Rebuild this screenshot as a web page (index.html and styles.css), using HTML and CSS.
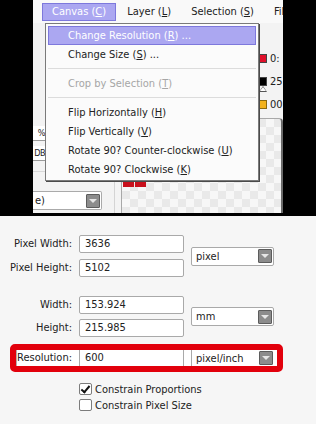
FILE: index.html
```html
<!DOCTYPE html>
<html lang="en">
<head>
    <meta charset="UTF-8">
    <meta name="viewport" content="width=device-width, initial-scale=1.0">
    <title>Canvas - Change Resolution</title>
    <link rel="stylesheet" href="styles.css">
</head>
<body>
    <div class="shot">
        <div class="app">
            <div class="menubar">
                <span class="mb-cut"></span>
                <div class="mb-item active">Canvas (<u>C</u>)</div>
                <div class="mb-item">Layer (<u>L</u>)</div>
                <div class="mb-item">Selection (<u>S</u>)</div>
                <div class="mb-item">Fil</div>
            </div>

            <div class="workspace">
                <div class="left-panel">
                    <div class="lp-field">%</div>
                    <div class="lp-field">DB</div>
                    <div class="lp-sep"></div>
                    <div class="lp-select">
                        <span>e)</span>
                        <span class="drop-btn"></span>
                    </div>
                </div>

                <div class="canvas-wrap">
                    <div class="swatches">
                        <div class="swatch-row"><span class="swatch red"></span>0:</div>
                        <div class="swatch-row"><span class="swatch black"></span>25<span class="marker"></span></div>
                        <div class="swatch-row"><span class="swatch orange"></span>00</div>
                    </div>
                    <div class="canvas">
                        <span class="cell" style="left: 1px;"></span>
                        <span class="cell" style="left: 13px;"></span>
                    </div>
                </div>
            </div>

            <!-- Canvas menu, opened -->
            <div class="dropdown">
                <div class="dd-item hover">Change Resolution (<u>R</u>) ...</div>
                <div class="dd-item">Change Size (<u>S</u>) ...</div>
                <div class="dd-sep"></div>
                <div class="dd-item disabled">Crop by Selection (<u>T</u>)</div>
                <div class="dd-sep"></div>
                <div class="dd-item">Flip Horizontally (<u>H</u>)</div>
                <div class="dd-item">Flip Vertically (<u>V</u>)</div>
                <div class="dd-item">Rotate 90? Counter-clockwise (<u>U</u>)</div>
                <div class="dd-item">Rotate 90? Clockwise (<u>K</u>)</div>
            </div>
        </div>
    </div>

    <div class="dialog">
        <div class="unit-group">
            <div class="lbl">Pixel Width:</div>
            <div class="field">3636</div>
            <div class="lbl">Pixel Height:</div>
            <div class="field">5102</div>
            <div class="select">pixel<span class="drop-btn"></span></div>
        </div>

        <div class="unit-group second">
            <div class="lbl">Width:</div>
            <div class="field">153.924</div>
            <div class="lbl">Height:</div>
            <div class="field">215.985</div>
            <div class="select">mm<span class="drop-btn"></span></div>
        </div>

        <div class="res-row">
            <div class="lbl">Resolution:</div>
            <div class="field">600</div>
            <div class="select">pixel/inch<span class="drop-btn"></span></div>
        </div>

        <div class="checks">
            <div class="check"><span class="box on"></span>Constrain Proportions</div>
            <div class="check"><span class="box"></span>Constrain Pixel Size</div>
        </div>
    </div>
</body>
</html>
```

FILE: styles.css
```css
* {
    margin: 0;
    padding: 0;
    box-sizing: border-box;
}

body {
    width: 316px;
    height: 424px;
    overflow: hidden;
    background: #000;
    font-family: "DejaVu Sans Condensed", "DejaVu Sans", sans-serif;
    font-stretch: condensed;
    font-size: 11px;
    color: #222;
}

u {
    text-decoration: underline;
    text-underline-offset: 1px;
}

/* ---- top screenshot ---- */

.shot {
    height: 216px;
    padding-left: 33px;
}

.app {
    position: relative;
    width: 250px;
    height: 213px;
    background: #f3f3f3;
    overflow: hidden;
}

.menubar {
    display: flex;
    align-items: center;
    height: 23px;
    background: #f9f9f9;
    white-space: nowrap;
}

.mb-cut {
    width: 3px;
    height: 4px;
    margin-right: 9px;
    background: #3a78c8;
}

.mb-item {
    height: 18px;
    line-height: 16px;
    padding: 0 9px;
    border: 1px solid transparent;
    color: #222;
}

.mb-item.active {
    background: #aba7f1;
    border-color: #7d78dc;
    color: #fff;
    margin-right: 1px;
}

.workspace {
    display: flex;
    height: 190px;
}

.left-panel {
    width: 82px;
    border-right: 1px solid #d4d4d4;
    padding-top: 103px;
}

.lp-field {
    width: 12px;
    height: 15px;
    margin-bottom: 5px;
    border-bottom: 1px solid #9a9a9a;
    background: #fff;
    font-size: 9px;
    letter-spacing: -0.5px;
    line-height: 14px;
    text-align: right;
    white-space: nowrap;
}

.lp-sep {
    height: 1px;
    margin-top: 10px;
    background: #d8d8d8;
}

.lp-select {
    display: flex;
    align-items: center;
    justify-content: space-between;
    width: 69px;
    height: 19px;
    margin-top: 19px;
    padding: 0 1px 0 2px;
    background: #fff;
    border: 1px solid #aaa;
    border-left: none;
    border-radius: 0 2px 2px 0;
}

.canvas-wrap {
    flex: 1;
    display: flex;
    flex-direction: column;
    margin-left: 6px;
}

.swatches {
    height: 95px;
    padding: 31px 0 0 138px;
}

.swatch-row {
    position: relative;
    display: flex;
    align-items: center;
    gap: 3px;
    height: 23px;
    line-height: 9px;
    font-size: 11px;
}

.swatch-row:first-child {
    margin-top: -7px;
}

.swatch {
    width: 8px;
    height: 9px;
    border: 1px solid #444;
}

.swatch.red { background: #e0102a; }
.swatch.black { background: #000; }
.swatch.orange { background: #f2b21c; border-color: #8a6a10; }

.marker {
    position: absolute;
    left: 0;
    top: 16px;
    width: 0;
    height: 0;
    border-left: 4px solid transparent;
    border-right: 4px solid transparent;
    border-bottom: 6px solid #555;
}

.marker::after {
    content: "";
    position: absolute;
    left: -3px;
    top: 1px;
    border-left: 3px solid transparent;
    border-right: 3px solid transparent;
    border-bottom: 4px solid #fff;
}

.canvas {
    position: relative;
    flex: 1;
    border: 1px solid #a8a8a8;
    border-right: 2px solid #6a6a6a;
    border-bottom: none;
    border-radius: 4px 4px 0 0;
    background-color: #f7f7f7;
    background-image:
        linear-gradient(45deg, #e9e9e9 25%, transparent 25%, transparent 75%, #e9e9e9 75%),
        linear-gradient(45deg, #e9e9e9 25%, transparent 25%, transparent 75%, #e9e9e9 75%);
    background-size: 16px 16px;
    background-position: 0 0, 8px 8px;
}

.cell {
    position: absolute;
    top: 62px;
    width: 11px;
    height: 6px;
    background: #c8101c;
}

/* ---- opened menu ---- */

.dropdown {
    position: absolute;
    left: 12px;
    top: 23px;
    width: 214px;
    height: 158px;
    padding: 2px 2px 0;
    background: #fbfbfb;
    border: 1px solid #7a7a7a;
    box-shadow: 1px 1px 0 #4a4a4a;
    white-space: nowrap;
}

.dd-item {
    height: 19px;
    line-height: 17px;
    padding-left: 19px;
    border: 1px solid transparent;
    color: #222;
}

.dd-item.hover {
    background: #aba7f1;
    border-color: #7d78dc;
    color: #fff;
}

.dd-item.disabled {
    color: #a6a6a6;
}

.dd-sep {
    height: 1px;
    margin: 4px 0 5px;
    background: #dcdcdc;
}

/* ---- dialog ---- */

.dialog {
    height: 208px;
    background: #f6f6f6;
    padding-top: 19px;
}

.unit-group {
    display: grid;
    grid-template-columns: 72px 105px 83px;
    grid-template-rows: 18px 18px;
    column-gap: 7px;
    row-gap: 6px;
}

.unit-group.second {
    margin-top: 19px;
    row-gap: 5px;
}

.lbl {
    grid-column: 1;
    text-align: right;
    line-height: 18px;
    white-space: nowrap;
}

.field {
    grid-column: 2;
    height: 18px;
    line-height: 16px;
    padding-left: 5px;
    background: #fff;
    border: 1px solid #a9a9a9;
    border-radius: 2px;
}

.select {
    grid-column: 3;
    grid-row: 1 / span 2;
    align-self: center;
    display: flex;
    align-items: center;
    justify-content: space-between;
    height: 19px;
    padding: 0 1px 0 4px;
    background: #fff;
    border: 1px solid #a9a9a9;
    border-radius: 2px;
}

.drop-btn {
    position: relative;
    width: 14px;
    height: 14px;
    background: #8c8c8c;
    border: 1px solid #5c5c5c;
    border-radius: 1px;
}

.drop-btn::after {
    content: "";
    position: absolute;
    left: 2px;
    top: 4px;
    border-left: 4px solid transparent;
    border-right: 4px solid transparent;
    border-top: 4px solid #e6e6e6;
}

.res-row {
    display: grid;
    grid-template-columns: 56px 105px 83px;
    column-gap: 7px;
    width: 273px;
    height: 28px;
    margin: 7px 0 0 10px;
    padding-right: 3px;
    border: 6px solid #e2000c;
    border-radius: 5px;
    background: #fff;
}

.res-row .lbl {
    line-height: 16px;
    border-left: 1px solid #b0b0b0;
}

.res-row .field {
    height: 16px;
    line-height: 16px;
    border-width: 0 1px;
    border-radius: 0;
}

.res-row .select {
    grid-row: 1;
    height: 16px;
    border-width: 0 0 0 1px;
    border-radius: 0;
}

.checks {
    margin: 9px 0 0 79px;
}

.check {
    display: flex;
    align-items: center;
    gap: 3px;
    height: 16px;
    line-height: 13px;
}

.box {
    position: relative;
    width: 13px;
    height: 12px;
    background: #fff;
    border: 1px solid #7c7c7c;
    border-radius: 2px;
}

.box.on::after {
    content: "";
    position: absolute;
    left: 3px;
    top: 0;
    width: 3px;
    height: 7px;
    border: solid #111;
    border-width: 0 2px 2px 0;
    transform: rotate(40deg);
}
```
